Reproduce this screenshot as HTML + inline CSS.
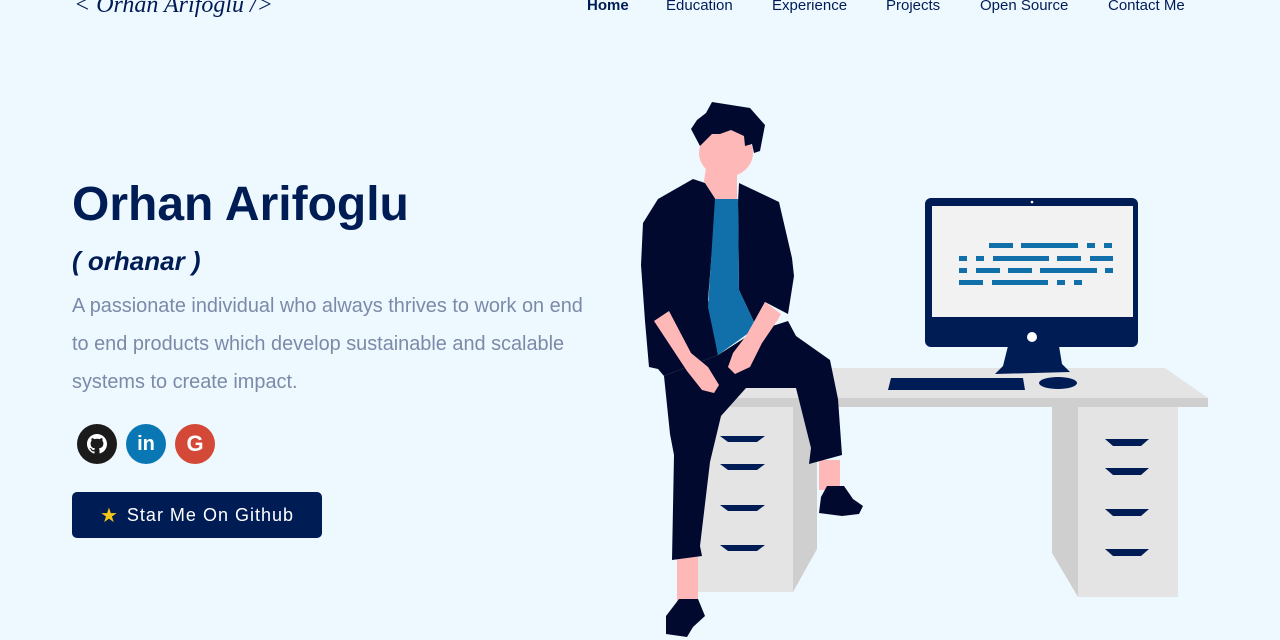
<!DOCTYPE html>
<html><head><meta charset="utf-8"><style>
*{margin:0;padding:0;box-sizing:border-box}
body{width:1280px;height:640px;overflow:hidden;background:#eef8ff;font-family:"Liberation Sans",sans-serif;position:relative}
.nav a{position:absolute;top:-3px;font-size:15px;color:#001c55;text-decoration:none;white-space:nowrap}
.logo{position:absolute;left:74px;top:-8px;font-family:"Liberation Serif",serif;font-style:italic;font-size:24px;color:#001c55;white-space:nowrap}
h1{position:absolute;left:72px;top:177px;font-size:48px;font-weight:bold;color:#001c55;white-space:nowrap}
h2{position:absolute;left:72px;top:246px;font-size:26px;font-style:italic;font-weight:bold;color:#001c55}
.p{position:absolute;left:72px;font-size:19.9px;color:#7b8aa8;white-space:nowrap}
.ic{position:absolute;top:424px;width:40px;height:40px;border-radius:50%;color:#fff;font-weight:bold;display:flex;align-items:center;justify-content:center}
.btn{position:absolute;left:72px;top:492px;width:250px;height:46px;background:#001c55;border-radius:5px;color:#fff;font-size:18px;letter-spacing:1px;display:flex;align-items:center;justify-content:center;gap:8px}
</style></head><body>
<div class="logo">&lt; Orhan Arifoglu /&gt;</div>
<div class="nav">
<a style="left:587px;font-weight:bold">Home</a>
<a style="left:666px">Education</a>
<a style="left:772px">Experience</a>
<a style="left:886px">Projects</a>
<a style="left:980px">Open Source</a>
<a style="left:1108px">Contact Me</a>
</div>
<h1>Orhan Arifoglu</h1>
<h2>( orhanar )</h2>
<div class="p" style="top:295px">A passionate individual who always thrives to work on end</div>
<div class="p" style="top:333px">to end products which develop sustainable and scalable</div>
<div class="p" style="top:371px">systems to create impact.</div>
<div class="ic" style="left:77px;background:#1b1b1b"><svg width="20" height="20" viewBox="0 0 16 16"><path fill="#fff" d="M8 0C3.6 0 0 3.6 0 8c0 3.5 2.3 6.5 5.5 7.6.4.1.5-.2.5-.4v-1.4c-2.2.5-2.7-1-2.7-1-.4-.9-.9-1.2-.9-1.2-.7-.5.1-.5.1-.5.8.1 1.200.8 1.2.8.7 1.2 1.9.9 2.3.7.1-.5.3-.9.5-1.1-1.8-.2-3.6-.9-3.6-4 0-.9.3-1.6.8-2.100-.1-.2-.4-1 .1-2.1 0 0 .7-.2 2.2.8.6-.2 1.3-.3 2-.3s1.4.1 2 .3c1.5-1 2.2-.8 2.2-.8.4 1.1.2 1.9.1 2.1.5.6.8 1.3.8 2.1 0 3.1-1.9 3.7-3.6 3.9.3.3.5.8.5 1.5v2.2c0 .2.1.5.6.4C13.7 14.5 16 11.5 16 8c0-4.4-3.6-8-8-8z"/></svg></div>
<div class="ic" style="left:126px;background:#0a77b5;font-size:20px">in</div>
<div class="ic" style="left:175px;background:#d34836;font-size:22px">G</div>
<div class="btn"><span style="color:#f5c518;font-size:20px">★</span>Star Me On Github</div>
<svg style="position:absolute;left:0;top:0" width="1280" height="640">
<polygon points="735,368 1165,368 1208,398 720,398" fill="#e4e4e4"/>
<rect x="720" y="398" width="488" height="9" fill="#cfcfcf"/>
<rect x="697" y="407" width="96" height="185" fill="#e4e4e4"/>
<polygon points="793,407 817,407 817,549 793,592" fill="#cfcfcf"/>
<polygon points="1052,407 1078,407 1078,597 1052,553" fill="#cfcfcf"/>
<rect x="1078" y="407" width="100" height="190" fill="#e4e4e4"/>
<g fill="#001c55">
<polygon points="720,436 765,436 757,442 728,442"/><polygon points="720,464 765,464 757,470 728,470"/>
<polygon points="720,505 765,505 757,511 728,511"/><polygon points="720,545 765,545 757,551 728,551"/>
<polygon points="1105,439 1149,439 1141,446 1113,446"/><polygon points="1105,468 1149,468 1141,475 1113,475"/>
<polygon points="1105,509 1149,509 1141,516 1113,516"/><polygon points="1105,549 1149,549 1141,556 1113,556"/>
<rect x="925" y="198" width="213" height="149" rx="6"/>
<polygon points="1008,346 1059,346 1062,364 1070,372 995,374 1003,366"/>
<polygon points="891,378 1023,378 1025,390 888,390"/>
<ellipse cx="1058" cy="383" rx="19" ry="6"/>
</g>
<rect x="932" y="206" width="201" height="111" fill="#f2f2f2"/>
<circle cx="1032" cy="337" r="5" fill="#fff"/><circle cx="1032" cy="202" r="1.3" fill="#fff"/>
<g fill="#1170a9">
<rect x="989" y="243" width="24" height="5"/><rect x="1021" y="243" width="57" height="5"/><rect x="1087" y="243" width="8" height="5"/><rect x="1104" y="243" width="8" height="5"/>
<rect x="959" y="256" width="8" height="5"/><rect x="976" y="256" width="8" height="5"/><rect x="993" y="256" width="56" height="5"/><rect x="1057" y="256" width="24" height="5"/><rect x="1090" y="256" width="23" height="5"/>
<rect x="959" y="268" width="8" height="5"/><rect x="976" y="268" width="24" height="5"/><rect x="1008" y="268" width="24" height="5"/><rect x="1040" y="268" width="57" height="5"/><rect x="1105" y="268" width="8" height="5"/>
<rect x="959" y="280" width="24" height="5"/><rect x="992" y="280" width="56" height="5"/><rect x="1057" y="280" width="8" height="5"/><rect x="1074" y="280" width="8" height="5"/>
</g>
<g fill="#ffb8b8">
<rect x="677" y="552" width="21" height="50"/>
<rect x="819" y="460" width="21" height="30"/>
<ellipse cx="726" cy="153" rx="27" ry="24"/>
<polygon points="706,168 737,168 737,199 716,200 704,181"/>
</g>
<g fill="#010a2e">
<polygon points="693,179 705,183 716,200 708,300 718,355 664,376 658,369 649,367 645,321 641,265 643,223 658,199"/>
<polygon points="739,183 779,202 792,258 794,276 788,314 765,302 754,322 739,290 738,202"/>
<polygon points="664,376 718,355 754,332 788,321 796,336 830,360 838,399 842,455 809,464 811,448 796,388 746,388 721,416 710,462 700,546 702,556 672,560 674,455 670,434"/>
<polygon points="679,599 698,599 705,616 693,627 687,637 666,634 666,616"/>
<polygon points="827,486 844,486 853,499 863,506 859,514 842,516 819,513 821,497"/>
<polygon points="712,102 750,108 765,125 760,151 754,153 752,144 745,146 744,136 731,130 720,134 712,134 700,146 691,129 697,120 706,113"/>
</g>
<polygon points="715,199 738,199 739,290 754,322 750,332 718,355 708,307" fill="#1170a9"/>
<g fill="#ffb8b8">
<polygon points="654,321 669,311 691,353 708,367 719,385 714,393 702,390 687,371"/>
<polygon points="765,302 781,314 777,321 762,343 750,367 735,374 728,367 733,353 746,336"/>
</g>
</svg>
</body></html>
